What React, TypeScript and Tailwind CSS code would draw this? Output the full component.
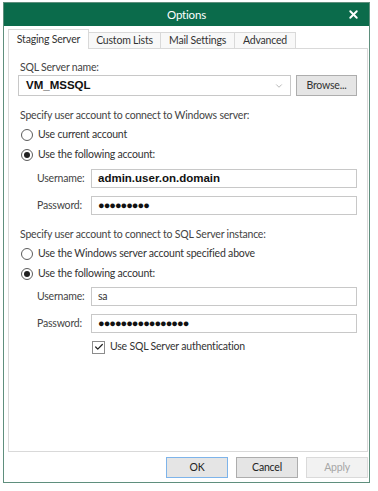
import { X, ChevronDown, Check } from "lucide-react"

const ui = "font-['Lato','Noto_Sans',sans-serif] tracking-[-0.2px]"

function Radio({ checked, label }: { checked?: boolean; label: string }) {
  return (
    <div className="flex h-[20px] items-center pl-[3px]">
      <span className="flex h-[12px] w-[12px] items-center justify-center rounded-full border border-[#5c5c5c] bg-white">
        {checked && <span className="h-[6px] w-[6px] rounded-full bg-[#222]" />}
      </span>
      <span className="ml-[5px] text-[10.5px] text-[#333]">{label}</span>
    </div>
  )
}

function Field({ label, value, bold, dots }: { label: string; value: string; bold?: boolean; dots?: boolean }) {
  return (
    <div className="flex h-[19px] items-center">
      <span className="w-[73px] pl-[19px] text-[10.5px] text-[#444]">{label}</span>
      <div className="flex h-[19px] flex-1 items-center border border-[#c8c8c8] bg-white pl-[6px]">
        <span
          className={
            dots
              ? "font-['Liberation_Sans',Arial,sans-serif] text-[11px] font-bold tracking-[-1px] text-[#111]"
              : bold
                ? "font-['Liberation_Sans',Arial,sans-serif] text-[11.5px] font-bold tracking-normal text-[#111]"
                : "text-[10.5px] text-[#333]"
          }
        >
          {value}
        </span>
      </div>
    </div>
  )
}

export default function App() {
  return (
    <div className={`h-[491px] w-[378px] bg-white pl-[3px] pt-[2px] ${ui}`}>
      <div className="flex h-[481px] w-[367px] flex-col border border-[#5f8f7d] bg-white">
        {/* title bar */}
        <div className="grid h-[23px] grid-cols-[1fr_auto_1fr] items-center bg-[#0b6b4b] text-white">
          <span />
          <span className="text-[11.5px]">Options</span>
          <span className="flex justify-end pr-[9px]">
            <X className="h-[13px] w-[13px]" strokeWidth={3.5} />
          </span>
        </div>

        <div className="flex flex-1 flex-col pl-[4px] pr-[1px]">
          {/* tabs */}
          <div className="mt-[2px] flex h-[20px] items-end text-[10.5px] text-[#333]">
            <div className="relative z-10 -mb-px flex h-[20px] w-[81px] items-center justify-center border border-b-0 border-[#d9d9d9] bg-white">
              Staging Server
            </div>
            <div className="flex h-[16px] w-[72px] items-center justify-center border border-l-0 border-b-0 border-[#d9d9d9] bg-[#f8f8f8]">
              Custom Lists
            </div>
            <div className="flex h-[16px] w-[74px] items-center justify-center border border-l-0 border-b-0 border-[#d9d9d9] bg-[#f8f8f8]">
              Mail Settings
            </div>
            <div className="flex h-[16px] w-[61px] items-center justify-center border border-l-0 border-b-0 border-[#d9d9d9] bg-[#f8f8f8]">
              Advanced
            </div>
          </div>

          {/* panel */}
          <div className="flex h-[404px] flex-col border border-[#d9d9d9] bg-white pl-[9px] pr-[10px]">
            <div className="mt-[11px] h-[14px] pl-[2px] text-[10.5px] leading-[14px] text-[#444]">SQL Server name:</div>
            <div className="mt-[1px] flex h-[21px] gap-[5px]">
              <div className="flex flex-1 items-center border border-[#c8c8c8] pl-[7px] pr-[6px]">
                <span className="flex-1 font-['Liberation_Sans',Arial,sans-serif] text-[11.5px] font-bold tracking-normal text-[#111]">
                  VM_MSSQL
                </span>
                <ChevronDown className="h-[10px] w-[10px] text-[#aaa]" strokeWidth={2} />
              </div>
              <div className="flex w-[61px] items-center justify-center border border-[#adadad] bg-[#e5e5e5] text-[10.5px] text-[#333]">
                Browse...
              </div>
            </div>

            <div className="mt-[12px] h-[14px] pl-[2px] text-[10.5px] leading-[14px] text-[#444]">
              Specify user account to connect to Windows server:
            </div>
            <div className="mt-[3px]">
              <Radio label="Use current account" />
              <Radio checked label="Use the following account:" />
            </div>
            <div className="mt-[4px] flex flex-col gap-[8px]">
              <Field label="Username:" value="admin.user.on.domain" bold />
              <Field label="Password:" value="●●●●●●●●●" dots />
            </div>

            <div className="mt-[12px] h-[14px] pl-[2px] text-[10.5px] leading-[14px] text-[#444]">
              Specify user account to connect to SQL Server instance:
            </div>
            <div className="mt-[3px]">
              <Radio label="Use the Windows server account specified above" />
              <Radio checked label="Use the following account:" />
            </div>
            <div className="mt-[3px] flex flex-col gap-[8px]">
              <Field label="Username:" value="sa" />
              <Field label="Password:" value="●●●●●●●●●●●●●●●●" dots />
            </div>

            <div className="mt-[7px] flex h-[14px] items-center pl-[74px]">
              <span className="flex h-[13px] w-[13px] items-center justify-center border border-[#8c8c8c] bg-white">
                <Check className="h-[10px] w-[10px] text-[#222]" strokeWidth={3} />
              </span>
              <span className="ml-[5px] text-[10.5px] text-[#333]">Use SQL Server authentication</span>
            </div>
          </div>

          {/* buttons */}
          <div className="mt-[5px] flex justify-end gap-[8px] text-[10.5px]">
            <div className="flex h-[21px] w-[62px] items-center justify-center border border-[#7eb4ea] bg-[#e5e5e5] text-[#222]">
              OK
            </div>
            <div className="flex h-[21px] w-[62px] items-center justify-center border border-[#adadad] bg-[#e5e5e5] text-[#222]">
              Cancel
            </div>
            <div className="flex h-[21px] w-[62px] items-center justify-center border border-[#dadada] bg-[#f2f2f2] text-[#a6a6a6]">
              Apply
            </div>
          </div>
        </div>
      </div>
    </div>
  )
}
